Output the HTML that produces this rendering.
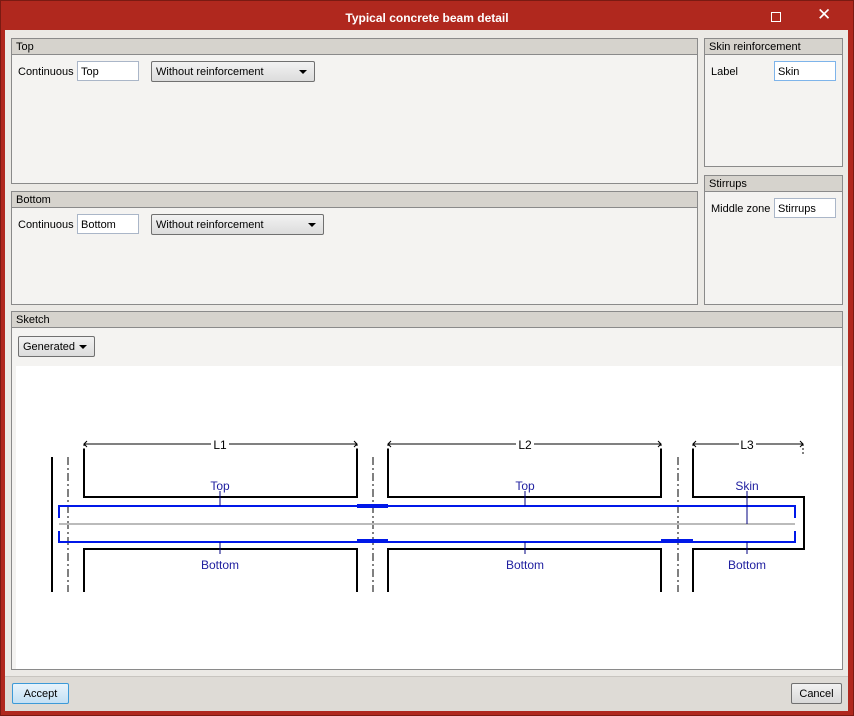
<!DOCTYPE html>
<html><head><style>
*{margin:0;padding:0;box-sizing:border-box}
body{width:854px;height:716px;background:#b0281e;font-family:"Liberation Sans",sans-serif;font-size:12px;color:#000;position:relative;overflow:hidden}
.frame{position:absolute;left:0;top:0;width:854px;height:716px;border:1px solid #7a1a12}
.title{position:absolute;left:0;top:11px;width:854px;text-align:center;color:#fff;font-weight:bold;font-size:12px}
.client{position:absolute;left:5px;top:30px;width:843px;height:681px;background:#ebe9e5}
.panel{position:absolute;border:1px solid #8a8a8a;background:#f4f3f1}
.ph{height:16px;background:#d6d3cd;border-bottom:1px solid #8a8a8a;padding-left:4px;padding-top:1px;line-height:15px;font-size:11px}
.lbl{position:absolute;font-size:11px}
.inp{position:absolute;background:#fff;border:1px solid #aab6c8;height:20px;font-size:11px;padding-left:3px;padding-top:1px;line-height:18px}
.sel{position:absolute;border:1px solid #707070;border-radius:2px;background:linear-gradient(#f2f2f2,#dcdcdc);height:21px;font-size:11px;padding-left:4px;padding-top:1px;line-height:19px}
.sel:after{content:"";position:absolute;right:7px;top:8px;border-left:4px solid transparent;border-right:4px solid transparent;border-top:4px solid #000}
.btn{position:absolute;height:21px;border:1px solid #707070;border-radius:2px;background:linear-gradient(#f2f2f2,#d8d8d8);font-size:11px;text-align:center;line-height:19px;padding-top:1px}
</style></head><body>
<div class="frame"></div>
<div class="title">Typical concrete beam detail</div>
<div style="position:absolute;left:771px;top:12px;width:10px;height:10px;border:1px solid #fff"></div>
<div style="position:absolute;left:817px;top:5px;color:#fff;font-size:17px">✕</div>
<div class="client"></div>

<div class="panel" style="left:11px;top:38px;width:687px;height:146px"><div class="ph">Top</div></div>
<div class="lbl" style="left:18px;top:66px">Continuous</div>
<div class="inp" style="left:77px;top:61px;width:62px">Top</div>
<div class="sel" style="left:151px;top:61px;width:164px">Without reinforcement</div>

<div class="panel" style="left:704px;top:38px;width:139px;height:129px"><div class="ph">Skin reinforcement</div></div>
<div class="lbl" style="left:711px;top:66px">Label</div>
<div class="inp" style="left:774px;top:61px;width:62px;border-color:#7eb4ea">Skin</div>

<div class="panel" style="left:11px;top:191px;width:687px;height:114px"><div class="ph">Bottom</div></div>
<div class="lbl" style="left:18px;top:219px">Continuous</div>
<div class="inp" style="left:77px;top:214px;width:62px">Bottom</div>
<div class="sel" style="left:151px;top:214px;width:173px">Without reinforcement</div>

<div class="panel" style="left:704px;top:175px;width:139px;height:130px"><div class="ph">Stirrups</div></div>
<div class="lbl" style="left:711px;top:203px">Middle zone</div>
<div class="inp" style="left:774px;top:198px;width:62px">Stirrups</div>

<div class="panel" style="left:11px;top:311px;width:832px;height:359px"><div class="ph">Sketch</div>
<div style="position:absolute;left:4px;top:54px;width:826px;height:303px;background:#fff"></div></div>
<div class="sel" style="left:18px;top:336px;width:77px">Generated</div>

<svg style="position:absolute;left:0;top:0" width="854" height="716" font-family="Liberation Sans,sans-serif" font-size="12">
<g stroke="#000" stroke-width="2" fill="none">
<line x1="52" y1="457" x2="52" y2="592"/>
<path d="M84 449V497H357V449M388 449V497H661V449M693 449V497H804V549H693V592M84 592V549H357V592M388 592V549H661V592"/>
</g>
<g stroke="#000" stroke-width="1" stroke-dasharray="8,3,2,3">
<line x1="68" y1="457" x2="68" y2="592"/><line x1="373" y1="457" x2="373" y2="592"/><line x1="678" y1="457" x2="678" y2="592"/>
</g>
<g stroke="#000" stroke-width="1" fill="none">
<line x1="84" y1="444" x2="211" y2="444"/><line x1="229" y1="444" x2="357" y2="444"/>
<line x1="388" y1="444" x2="516" y2="444"/><line x1="534" y1="444" x2="661" y2="444"/>
<line x1="693" y1="444" x2="739" y2="444"/><line x1="756" y1="444" x2="803" y2="444"/>
<g stroke-dasharray="2,2"><path d="M84 444V456M357 444V456M388 444V456M661 444V456M693 444V456M803 444V456"/></g>
<path d="M87 441L84 444L87 447M354 441L357 444L354 447M391 441L388 444L391 447M658 441L661 444L658 447M696 441L693 444L696 447M800 441L803 444L800 447"/>
</g>
<g fill="#000" text-anchor="middle"><text x="220" y="449">L1</text><text x="525" y="449">L2</text><text x="747" y="449">L3</text></g>
<line x1="59" y1="524" x2="795" y2="524" stroke="#bbb" stroke-width="2"/>
<g stroke="#0018e8" stroke-width="2" fill="none">
<path d="M59 518V506H795V518M59 531V542H795V531"/>
</g>
<g stroke="#0018e8" stroke-width="4">
<line x1="357" y1="506" x2="388" y2="506"/><line x1="357" y1="541" x2="388" y2="541"/><line x1="661" y1="541" x2="693" y2="541"/>
</g>
<g stroke="#000080" stroke-width="1">
<path d="M220 491V506M525 491V506M747 491V524M220 542V554M525 542V554M747 542V554"/>
</g>
<g fill="#2020a0" text-anchor="middle">
<text x="220" y="490">Top</text><text x="525" y="490">Top</text><text x="747" y="490">Skin</text>
<text x="220" y="569">Bottom</text><text x="525" y="569">Bottom</text><text x="747" y="569">Bottom</text>
</g>
</svg>

<div style="position:absolute;left:5px;top:676px;width:843px;height:35px;background:#dedbd6;border-top:1px solid #c8c5c0"></div>
<div class="btn" style="left:12px;top:683px;width:57px;border-color:#3c9ad8;background:linear-gradient(#e8f4fc,#c4e0f4)">Accept</div>
<div class="btn" style="left:791px;top:683px;width:51px">Cancel</div>
</body></html>
